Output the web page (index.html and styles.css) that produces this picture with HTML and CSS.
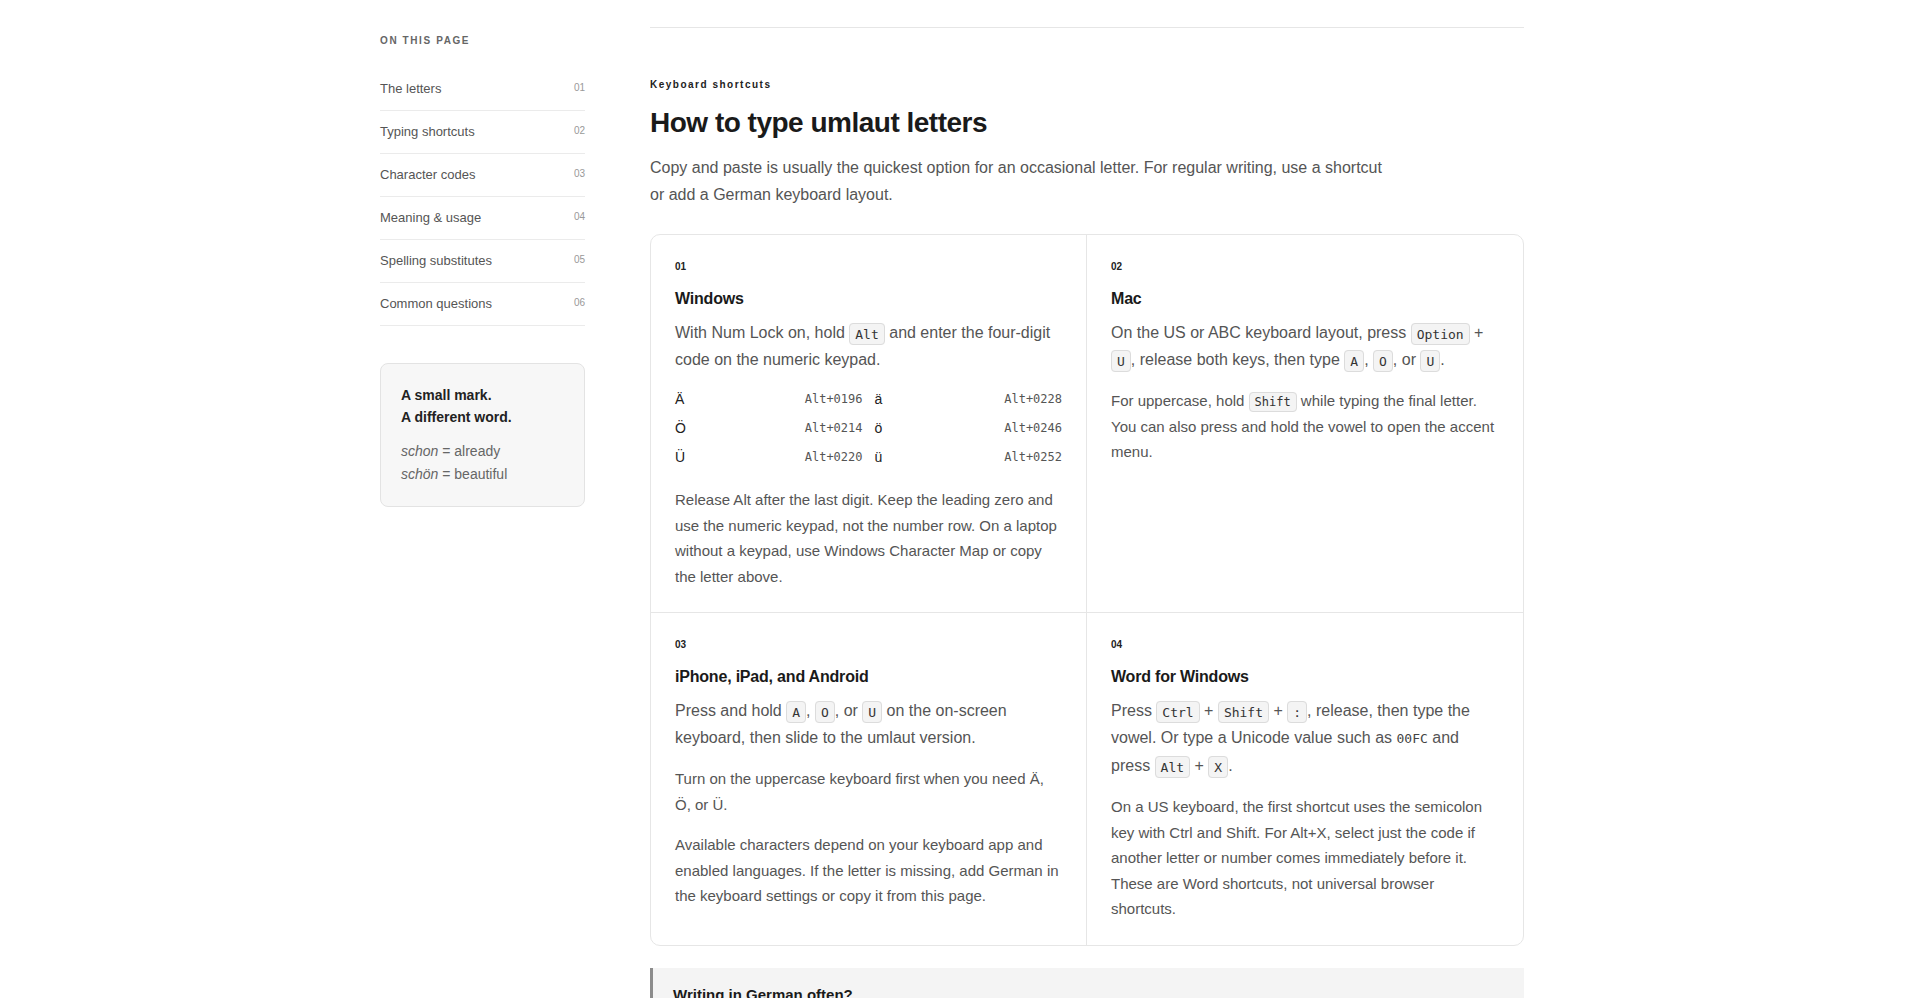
FILE: index.html
```html
<!DOCTYPE html>
<html lang="en">
    <head>
        <meta charset="UTF-8">
        <meta name="viewport" content="width=device-width, initial-scale=1.0">
        <title>How to type umlaut letters</title>
        <link rel="stylesheet" href="styles.css">
    </head>
    <body>
        <div class="page">
            <aside class="sidebar">
                <p class="toc-label">On this page</p>
                <ul class="toc">
                    <li><a href="#letters">The letters</a><span>01</span></li>
                    <li><a href="#shortcuts">Typing shortcuts</a><span>02</span></li>
                    <li><a href="#codes">Character codes</a><span>03</span></li>
                    <li><a href="#meaning">Meaning &amp; usage</a><span>04</span></li>
                    <li><a href="#substitutes">Spelling substitutes</a><span>05</span></li>
                    <li><a href="#questions">Common questions</a><span>06</span></li>
                </ul>

                <div class="note-card">
                    <p class="note-title">A small mark.<br>A different word.</p>
                    <p class="note-words"><em>schon</em> = already<br><em>schön</em> = beautiful</p>
                </div>
            </aside>

            <main class="content">
                <section class="section" id="shortcuts">
                    <p class="eyebrow">Keyboard shortcuts</p>
                    <h1>How to type umlaut letters</h1>
                    <p class="intro">Copy and paste is usually the quickest option for an occasional letter. For regular writing, use a shortcut or add a German keyboard layout.</p>

                    <div class="methods">
                        <div class="method">
                            <span class="num">01</span>
                            <h3>Windows</h3>
                            <p class="lead">With Num Lock on, hold <kbd>Alt</kbd> and enter the four-digit code on the numeric keypad.</p>
                            <div class="codes">
                                <div class="code-row"><span class="ch">Ä</span><code>Alt+0196</code></div>
                                <div class="code-row"><span class="ch">ä</span><code>Alt+0228</code></div>
                                <div class="code-row"><span class="ch">Ö</span><code>Alt+0214</code></div>
                                <div class="code-row"><span class="ch">ö</span><code>Alt+0246</code></div>
                                <div class="code-row"><span class="ch">Ü</span><code>Alt+0220</code></div>
                                <div class="code-row"><span class="ch">ü</span><code>Alt+0252</code></div>
                            </div>
                            <p>Release Alt after the last digit. Keep the leading zero and use the numeric keypad, not the number row. On a laptop without a keypad, use Windows Character Map or copy the letter above.</p>
                        </div>

                        <div class="method">
                            <span class="num">02</span>
                            <h3>Mac</h3>
                            <p class="lead">On the US or ABC keyboard layout, press <kbd>Option</kbd> + <kbd>U</kbd>, release both keys, then type <kbd>A</kbd>, <kbd>O</kbd>, or <kbd>U</kbd>.</p>
                            <p>For uppercase, hold <kbd>Shift</kbd> while typing the final letter. You can also press and hold the vowel to open the accent menu.</p>
                        </div>

                        <div class="method">
                            <span class="num">03</span>
                            <h3>iPhone, iPad, and Android</h3>
                            <p class="lead">Press and hold <kbd>A</kbd>, <kbd>O</kbd>, or <kbd>U</kbd> on the on-screen keyboard, then slide to the umlaut version.</p>
                            <p>Turn on the uppercase keyboard first when you need Ä, Ö, or Ü.</p>
                            <p>Available characters depend on your keyboard app and enabled languages. If the letter is missing, add German in the keyboard settings or copy it from this page.</p>
                        </div>

                        <div class="method">
                            <span class="num">04</span>
                            <h3>Word for Windows</h3>
                            <p class="lead">Press <kbd>Ctrl</kbd> + <kbd>Shift</kbd> + <kbd>:</kbd>, release, then type the vowel. Or type a Unicode value such as <code class="plain">00FC</code> and press <kbd>Alt</kbd> + <kbd>X</kbd>.</p>
                            <p>On a US keyboard, the first shortcut uses the semicolon key with Ctrl and Shift. For Alt+X, select just the code if another letter or number comes immediately before it. These are Word shortcuts, not universal browser shortcuts.</p>
                        </div>
                    </div>

                    <div class="tip">
                        <h4>Writing in German often?</h4>
                        <p>Add the German keyboard layout in your system settings and switch with one shortcut.</p>
                    </div>
                </section>
            </main>
        </div>
    </body>
</html>
```

FILE: styles.css
```css
body {
    margin: 0;
    padding-right: 15px;
    font-family: 'Liberation Sans', Arial, sans-serif;
    color: #555;
    background-color: #fff;
}

.page {
    display: flex;
    gap: 65px;
    width: 1144px;
    margin: 0 auto;
    padding-bottom: 80px;
}

/* left column */

.sidebar {
    flex: none;
    width: 205px;
    padding-top: 34px;
    align-self: flex-start;
    position: sticky;
    top: 0;
}

.toc-label {
    margin: 0 0 20px;
    font-size: 10px;
    line-height: 14px;
    font-weight: bold;
    letter-spacing: 1.6px;
    text-transform: uppercase;
    color: #666;
}

.toc {
    list-style: none;
    margin: 0;
    padding: 0;
}

.toc li {
    display: flex;
    justify-content: space-between;
    align-items: flex-start;
    padding: 12px 0;
    border-bottom: 1px solid #ebebeb;
}

.toc a {
    font-size: 13px;
    line-height: 18px;
    color: #555;
    text-decoration: none;
}

.toc span {
    font-size: 10px;
    line-height: 14px;
    margin-top: 1px;
    color: #999;
}

.note-card {
    margin-top: 37px;
    padding: 20px;
    background-color: #f7f7f7;
    border: 1px solid #e3e3e3;
    border-radius: 8px;
}

.note-title {
    margin: 0;
    font-size: 14px;
    line-height: 22px;
    font-weight: bold;
    color: #222;
}

.note-words {
    margin: 12px 0 0;
    font-size: 14px;
    line-height: 23px;
    color: #666;
}

/* main column */

.content {
    flex: 1;
    min-width: 0;
}

.section {
    margin-top: 27px;
    padding-top: 50px;
    border-top: 1px solid #e6e6e6;
}

.eyebrow {
    margin: 0;
    font-size: 10px;
    line-height: 14px;
    font-weight: bold;
    letter-spacing: 1.5px;
    color: #222;
}

h1 {
    margin: 14px 0 0;
    font-size: 28px;
    line-height: 34px;
    letter-spacing: -0.5px;
    color: #1a1a1a;
}

.intro {
    margin: 14px 0 0;
    max-width: 740px;
    font-size: 16px;
    line-height: 27px;
    color: #555;
}

.methods {
    display: grid;
    grid-template-columns: 1fr 1fr;
    margin-top: 26px;
    border: 1px solid #e6e6e6;
    border-radius: 10px;
    overflow: hidden;
}

.method {
    padding: 24px 24px 23px;
}

.method:nth-child(odd) {
    border-right: 1px solid #e6e6e6;
}

.method:nth-child(-n+2) {
    border-bottom: 1px solid #e6e6e6;
}

.num {
    display: block;
    font-size: 10px;
    line-height: 16px;
    font-weight: bold;
    color: #222;
}

.method h3 {
    margin: 12px 0 0;
    font-size: 16px;
    line-height: 24px;
    letter-spacing: -0.2px;
    color: #1a1a1a;
}

.method p {
    margin: 15px 0 0;
    font-size: 15px;
    line-height: 25.5px;
}

.method p.lead {
    margin-top: 8px;
    font-size: 16px;
    line-height: 27px;
}

kbd,
code {
    font-family: 'DejaVu Sans Mono', 'Liberation Mono', monospace;
}

kbd {
    padding: 2.5px 5px;
    font-size: 13px;
    line-height: 20px;
    color: #333;
    background-color: #f4f4f4;
    border: 1px solid #dcdcdc;
    border-radius: 4px;
}

.method p:not(.lead) kbd {
    padding: 2px 5px;
    font-size: 12px;
    line-height: 18px;
}

code.plain {
    font-size: 13px;
    color: #444;
}

.codes {
    display: grid;
    grid-template-columns: 1fr 1fr;
    column-gap: 12px;
    margin-top: 11px;
    margin-bottom: 16px;
}

.codes + p {
    margin-top: 0;
}

.code-row {
    display: flex;
    justify-content: space-between;
    align-items: center;
    height: 29px;
}

.code-row .ch {
    font-size: 14px;
    color: #222;
}

.code-row code {
    font-size: 12px;
    color: #555;
}

.tip {
    margin-top: 22px;
    padding: 17px 20px;
    background-color: #f4f4f4;
    border-left: 3px solid #8c8c8c;
}

.tip h4 {
    margin: 0;
    font-size: 15px;
    line-height: 20px;
    color: #1a1a1a;
}

.tip p {
    margin: 8px 0 0;
    font-size: 15px;
    line-height: 25px;
}
```
